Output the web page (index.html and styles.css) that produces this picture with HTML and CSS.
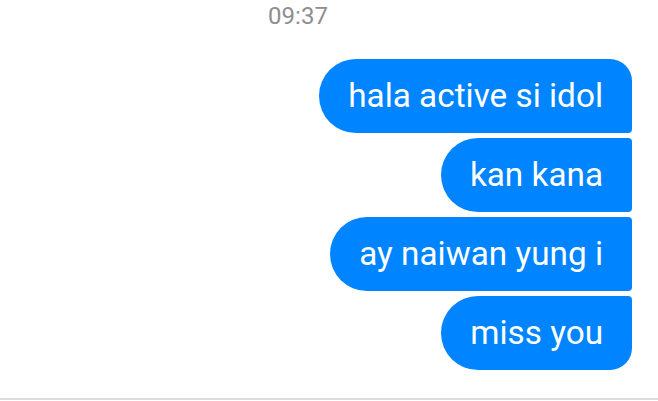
FILE: index.html
```html
<!DOCTYPE html>
<html lang="tl">
<head>
<meta charset="utf-8">
<title>Chat</title>
<link rel="stylesheet" href="styles.css">
</head>
<body>
<div class="thread">
  <div class="stamp">09:37</div>
  <div class="messages">
    <div class="bubble first">hala active si idol</div>
    <div class="bubble">kan kana</div>
    <div class="bubble">ay naiwan yung i</div>
    <div class="bubble last">miss you</div>
  </div>
</div>
<div class="composer-edge"></div>
</body>
</html>
```

FILE: styles.css
```css
html, body {
  margin: 0;
  padding: 0;
  background: #ffffff;
}

body {
  width: 658px;
  height: 401px;
  overflow: hidden;
  display: flex;
  flex-direction: column;
  font-family: Roboto, "Noto Sans", sans-serif;
}

.thread {
  flex: 1;
  display: flex;
  flex-direction: column;
}

.stamp {
  text-align: center;
  font-size: 24px;
  line-height: 30px;
  color: #8e8e8e;
  width: 596px;
  margin-top: 1px;
}

.messages {
  display: flex;
  flex-direction: column;
  align-items: flex-end;
  gap: 5px;
  padding-right: 26px;
  margin-top: 28px;
}

.bubble {
  background: #0084ff;
  color: #ffffff;
  font-size: 33.3px;
  line-height: 74px;
  height: 74px;
  padding: 0 29px;
  border-radius: 37px 4px 4px 37px;
  white-space: nowrap;
}

.bubble.first {
  border-top-right-radius: 22px;
}

.bubble.last {
  border-bottom-right-radius: 22px;
}

.composer-edge {
  height: 2px;
  background: #dcdcdc;
  margin-bottom: 1px;
}
```
